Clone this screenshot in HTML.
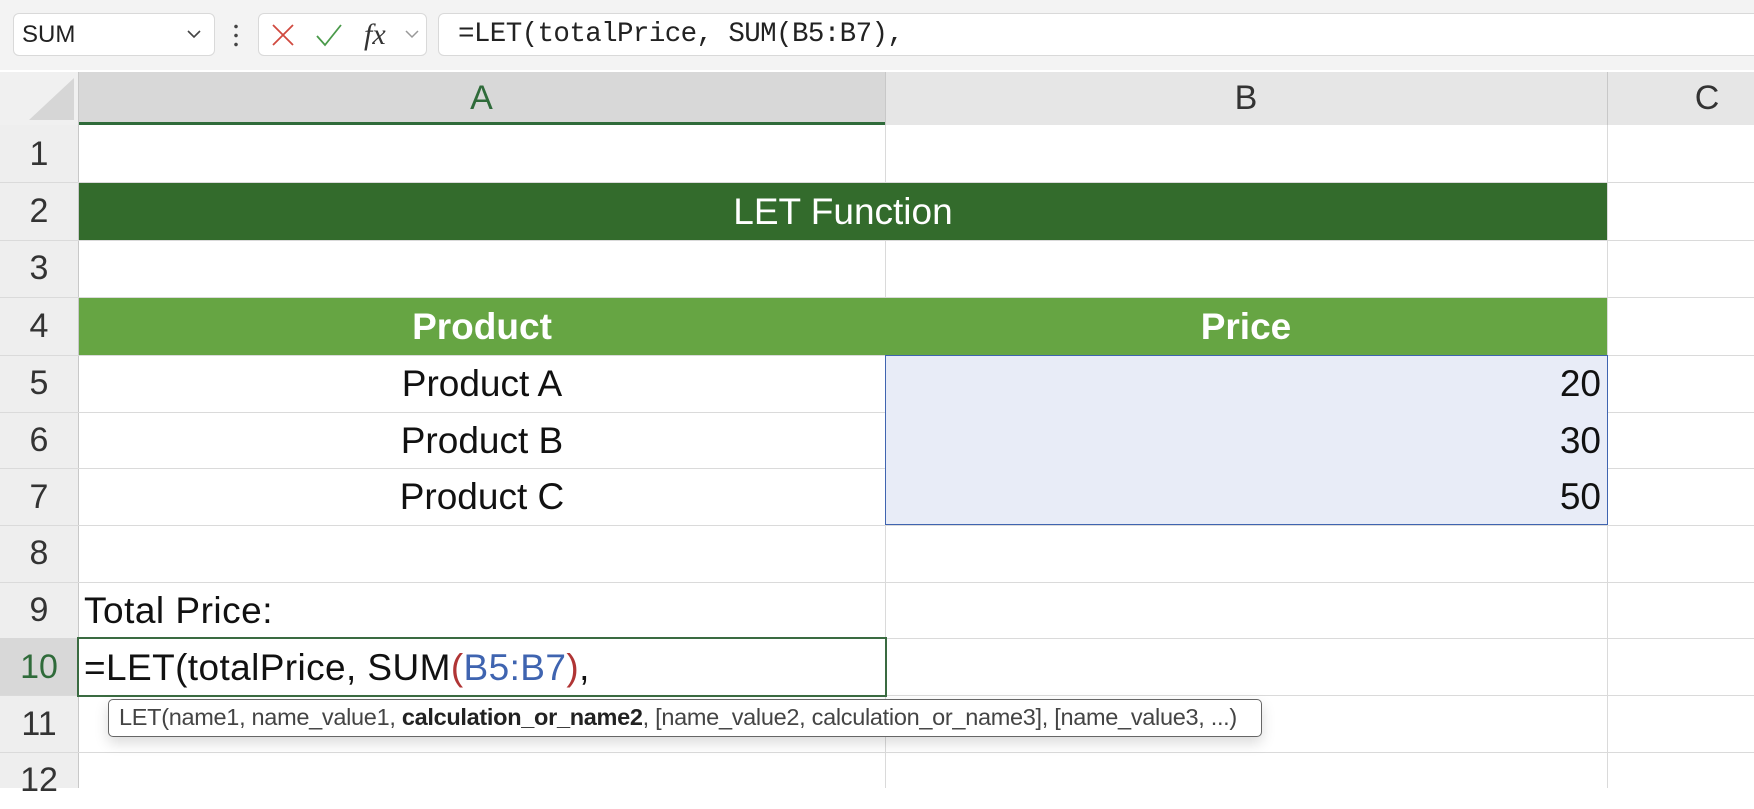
<!DOCTYPE html><html><head><style>
*{margin:0;padding:0;box-sizing:border-box}
body{width:1754px;height:788px;overflow:hidden;background:#fff;font-family:"Liberation Sans",sans-serif;position:relative}
.a{position:absolute}
.hl{position:absolute;height:1px;background:#dadada}
.vl{position:absolute;width:1px;background:#dadada}
.rn{position:absolute;left:0;width:78px;text-align:center;font-size:34px;color:#333;line-height:57px;height:57px}
.ct{position:absolute;font-size:37px;color:#111;line-height:57px;height:57px;white-space:nowrap}
</style></head><body>
<div class="a" style="left:0;top:0;width:1754px;height:70px;background:#f3f3f3"></div>
<div class="a" style="left:13px;top:13px;width:202px;height:43px;background:#fff;border:1px solid #d9d9d9;border-radius:6px"></div>
<div class="a" style="left:22px;top:13px;line-height:43px;font-size:24px;color:#222">SUM</div>
<svg class="a" style="left:186px;top:28px" width="16" height="12"><path d="M2 3l6 6 6-6" fill="none" stroke="#444" stroke-width="1.6"/></svg>
<div class="a" style="left:234px;top:22px;width:4px;height:26px;background:radial-gradient(circle,#444 1.6px,transparent 2px) 0 0/4px 9px"></div>
<div class="a" style="left:258px;top:13px;width:169px;height:43px;background:#fff;border:1px solid #d9d9d9;border-radius:6px"></div>
<svg class="a" style="left:270px;top:22px" width="26" height="26"><path d="M3 3l20 20M23 3L3 23" stroke="#d04a3f" stroke-width="1.8"/></svg>
<svg class="a" style="left:314px;top:22px" width="30" height="26"><path d="M3 14l8 9L27 3" fill="none" stroke="#4a9a4a" stroke-width="1.8"/></svg>
<div class="a" style="left:364px;top:18px;font-family:'Liberation Serif',serif;font-style:italic;font-size:30px;line-height:34px;color:#333">fx</div>
<svg class="a" style="left:404px;top:29px" width="16" height="12"><path d="M2 2l6 6 6-6" fill="none" stroke="#999" stroke-width="1.5"/></svg>
<div class="a" style="left:438px;top:13px;width:1330px;height:43px;background:#fff;border:1px solid #d9d9d9;border-radius:6px"></div>
<div class="a" style="left:458px;top:13px;line-height:43px;font-size:27.5px;font-family:'Liberation Mono',monospace;color:#222;letter-spacing:-0.6px">=LET(totalPrice, SUM(B5:B7),</div>
<div class="a" style="left:0;top:72px;width:1754px;height:53px;background:#e6e6e6"></div>
<div class="a" style="left:0;top:72px;width:78px;height:53px;background:#f0f0f0"></div>
<svg class="a" style="left:26px;top:76px" width="50" height="46"><path d="M48 2V44H3Z" fill="#d6d6d6"/></svg>
<div class="a" style="left:78px;top:72px;width:807px;height:53px;background:#d8d8d8;border-bottom:3px solid #2f6b3a"></div>
<div class="a" style="left:78px;top:72px;width:807px;line-height:52px;text-align:center;font-size:34px;color:#2f6b3a">A</div>
<div class="a" style="left:885px;top:72px;width:722px;line-height:52px;text-align:center;font-size:34px;color:#333">B</div>
<div class="a" style="left:1607px;top:72px;width:200px;line-height:52px;text-align:center;font-size:34px;color:#333">C</div>
<div class="vl" style="left:885px;top:72px;height:53px;background:#c8c8c8"></div>
<div class="vl" style="left:1607px;top:72px;height:53px;background:#c8c8c8"></div>
<div class="a" style="left:0;top:125px;width:78px;height:663px;background:#eeeeee"></div>
<div class="vl" style="left:78px;top:72px;height:716px;background:#c8c8c8"></div>
<div class="vl" style="left:885px;top:125px;height:663px"></div>
<div class="vl" style="left:1607px;top:125px;height:663px"></div>
<div class="hl" style="left:0;top:182px;width:1754px"></div>
<div class="hl" style="left:0;top:240px;width:1754px"></div>
<div class="hl" style="left:0;top:297px;width:1754px"></div>
<div class="hl" style="left:0;top:355px;width:1754px"></div>
<div class="hl" style="left:0;top:412px;width:1754px"></div>
<div class="hl" style="left:0;top:468px;width:1754px"></div>
<div class="hl" style="left:0;top:525px;width:1754px"></div>
<div class="hl" style="left:0;top:582px;width:1754px"></div>
<div class="hl" style="left:0;top:638px;width:1754px"></div>
<div class="hl" style="left:0;top:695px;width:1754px"></div>
<div class="hl" style="left:0;top:752px;width:1754px"></div>
<div class="rn" style="top:126px">1</div><div class="rn" style="top:183px">2</div><div class="rn" style="top:240px">3</div><div class="rn" style="top:298px">4</div><div class="rn" style="top:355px">5</div><div class="rn" style="top:412px">6</div><div class="rn" style="top:469px">7</div><div class="rn" style="top:525px">8</div><div class="rn" style="top:582px">9</div>
<div class="a" style="left:0;top:638px;width:78px;height:57px;background:#d8d8d8"></div>
<div class="rn" style="top:639px;color:#2f6b3a">10</div><div class="rn" style="top:696px">11</div><div class="rn" style="top:752px">12</div>
<div class="a" style="left:79px;top:183px;width:1528px;height:57px;background:#336b2c;color:#fff;text-align:center;line-height:57px;font-size:37px">LET Function</div>
<div class="a" style="left:79px;top:298px;width:1528px;height:57px;background:#66a543"></div>
<div class="ct" style="left:79px;top:298px;width:806px;text-align:center;color:#fff;font-weight:bold">Product</div>
<div class="ct" style="left:885px;top:298px;width:722px;text-align:center;color:#fff;font-weight:bold">Price</div>
<div class="a" style="left:885px;top:355px;width:723px;height:170px;background:#e8ecf7;border:1.5px solid #3f64b0"></div>
<div class="ct" style="left:79px;top:355px;width:806px;text-align:center">Product A</div>
<div class="ct" style="left:79px;top:412px;width:806px;text-align:center">Product B</div>
<div class="ct" style="left:79px;top:468px;width:806px;text-align:center">Product C</div>
<div class="ct" style="left:885px;top:355px;width:716px;text-align:right">20</div>
<div class="ct" style="left:885px;top:412px;width:716px;text-align:right">30</div>
<div class="ct" style="left:885px;top:468px;width:716px;text-align:right">50</div>
<div class="ct" style="left:84px;top:582px;letter-spacing:0.5px">Total Price:</div>
<div class="a" style="left:77px;top:637px;width:810px;height:60px;border:2px solid #3a6b41;background:#fff"></div>
<div class="ct" style="left:84px;top:639px;letter-spacing:0.4px">=LET(totalPrice, SUM<span style="color:#b03535">(</span><span style="color:#3f64b0">B5:B7</span><span style="color:#b03535">)</span>,</div>
<div class="a" style="left:108px;top:699px;width:1154px;height:38px;background:#fff;border:1.5px solid #666;border-radius:5px;box-shadow:0 6px 14px rgba(0,0,0,.15);font-size:23.5px;line-height:35px;padding-left:10px;color:#444;white-space:nowrap;letter-spacing:-0.3px">LET(name1, name_value1, <b style="color:#222">calculation_or_name2</b>, [name_value2, calculation_or_name3], [name_value3, ...)</div>
</body></html>
